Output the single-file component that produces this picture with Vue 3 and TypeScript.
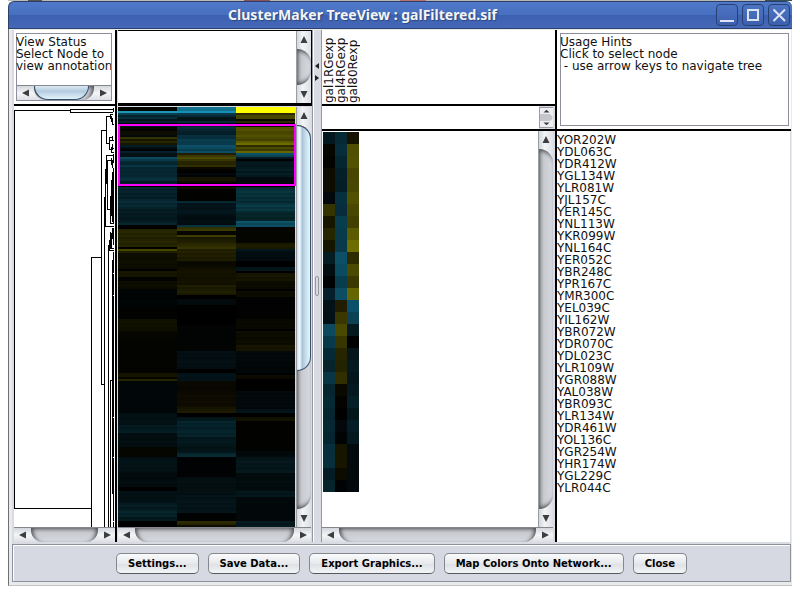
<script setup lang="ts">
import { defineComponent, h } from 'vue'

type Run = [end: number, color: string]

const arrowPaths: Record<string, string> = {
  up: 'M4 0 L7.5 7 H0.5 Z',
  down: 'M4 8 L0.5 1 H7.5 Z',
  left: 'M0 4 L7 0.5 V7.5 Z',
  right: 'M8 4 L1 0.5 V7.5 Z',
}

const ScrollBar = defineComponent({
  props: {
    dir: { type: String, default: 'v' },
    thumb: { type: Number, default: 0 },
  },
  setup(props) {
    const arrow = (kind: string) =>
      h('button', { class: 'sb-btn', type: 'button', 'aria-label': `Scroll ${kind}` }, [
        h('svg', { viewBox: '0 0 8 8' }, [h('path', { d: arrowPaths[kind], fill: '#3c3e42' })]),
      ])
    return () => {
      const vertical = props.dir === 'v'
      const size = `${props.thumb}%`
      return h('div', { class: ['sb', vertical ? 'sb-v' : 'sb-h'] }, [
        arrow(vertical ? 'up' : 'left'),
        h('div', { class: 'sb-track' }, props.thumb
          ? [h('div', { class: 'sb-thumb', style: vertical ? { height: size } : { width: size } })]
          : []),
        arrow(vertical ? 'down' : 'right'),
      ])
    }
  },
})

const experiments = ['gal1RGexp', 'gal4RGexp', 'gal80Rexp']

const genes = [
  'YOR202W', 'YDL063C', 'YDR412W', 'YGL134W', 'YLR081W', 'YJL157C', 'YER145C', 'YNL113W', 'YKR099W', 'YNL164C',
  'YER052C', 'YBR248C', 'YPR167C', 'YMR300C', 'YEL039C', 'YIL162W', 'YBR072W', 'YDR070C', 'YDL023C', 'YLR109W',
  'YGR088W', 'YAL038W', 'YBR093C', 'YLR134W', 'YDR461W', 'YOL136C', 'YGR254W', 'YHR174W', 'YGL229C', 'YLR044C',
]

/* Colours of the selected genes, one list per experiment. */
const selected: string[][] = [
  ['#04191f', '#060600', '#030300', '#0c0c00', '#0c0c00', '#02080c', '#343400', '#171700', '#262600', '#151500',
    '#041c23', '#020d12', '#000303', '#05202a', '#031216', '#021115', '#0d4a5e', '#08394a', '#062a35', '#05242c',
    '#083645', '#05262f', '#062a34', '#05262f', '#052833', '#052630', '#072f3b', '#082f3c', '#041c25', '#05242c'],
  ['#062a34', '#072c3a', '#05262f', '#041f28', '#041e27', '#07303e', '#072d3c', '#083d4d', '#073a4a', '#083a4b',
    '#0c4f67', '#0b4b60', '#083d4e', '#0c4d64', '#221d00', '#3a3700', '#4a4900', '#373500', '#272500', '#242300',
    '#312f00', '#0a0900', '#040300', '#000000', '#02080c', '#010405', '#171400', '#171400', '#0c0b00', '#000203'],
  ['#161300', '#504f00', '#525100', '#474500', '#494800', '#525100', '#494800', '#424000', '#5c5b00', '#6e6d00',
    '#2d2c00', '#4a4a00', '#3b3900', '#666600', '#0b5069', '#0b4254', '#05191f', '#000202', '#04161b', '#041a20',
    '#04161b', '#041a20', '#041f26', '#03161a', '#051d24', '#04191e', '#020a0e', '#020a0e', '#020a0c', '#02080b'],
]

const before: string[][] = [
  ['#060800', '#060600', '#1c96b4', '#094152', '#04222c', '#072f3c', '#03161d', '#05242f', '#010608'],
  ['#11728f', '#11728f', '#1690b4', '#08384a', '#062b38', '#031418', '#031418', '#062c3a', '#010a0c'],
  ['#ffff00', '#ffff00', '#ffff00', '#2c2c00', '#474700', '#474700', '#0a0a00', '#2a2a00', '#000000'],
]

/* Runs of similar rows below the selection: last row (exclusive) and base colour. */
const after: Run[][] = [
  [[40, '#000000'], [41, '#08303c'], [46, '#052028'], [51, '#062730'], [58, '#04191f'], [59, '#062932'], [61, '#000000'],
    [70, '#232300'], [71, '#000000'], [72, '#454500'], [73, '#1a1a00'], [81, '#0d0d00'], [82, '#000000'], [85, '#141400'],
    [87, '#020200'], [91, '#0c0c00'], [100, '#000405'], [106, '#020200'], [112, '#101000'], [116, '#060500'],
    [133, '#030300'], [135, '#151400'], [136, '#050500'], [137, '#262500'], [153, '#010608'], [159, '#021014'],
    [163, '#031a20'], [170, '#020d10'], [175, '#050500'], [182, '#031216'], [190, '#020b0d'], [192, '#000000'],
    [198, '#031014'], [202, '#041c22'], [205, '#052128'], [207, '#03191c'], [210, '#000000']],
  [[40, '#000000'], [41, '#121100'], [47, '#020200'], [48, '#06242c'], [54, '#03141a'], [59, '#020d11'], [60, '#07303c'],
    [62, '#3a3900'], [64, '#060500'], [65, '#3a3800'], [68, '#1c1b00'], [70, '#2a2900'], [71, '#3e3d00'], [77, '#1e1d00'],
    [80, '#0a0900'], [89, '#121100'], [94, '#1c1c00'], [96, '#000000'], [99, '#020a0c'], [109, '#000000'],
    [122, '#020303'], [131, '#030e12'], [133, '#000000'], [137, '#03131a'], [143, '#090700'], [150, '#0d0a00'],
    [153, '#1a1700'], [155, '#000000'], [157, '#02181c'], [165, '#052129'], [169, '#03181c'], [173, '#031417'],
    [175, '#062830'], [185, '#010203'], [194, '#030f11'], [203, '#041318'], [207, '#010202'], [209, '#292600'],
    [210, '#0b0a00']],
  [[40, '#000000'], [47, '#07303a'], [48, '#04222a'], [52, '#083844'], [57, '#052529'], [60, '#0c4a5c'], [68, '#050500'],
    [71, '#1c1b00'], [72, '#03161d'], [77, '#020c10'], [80, '#000000'], [82, '#04161c'], [83, '#000000'],
    [87, '#161500'], [91, '#0a0a00'], [92, '#000000'], [95, '#0c0b00'], [106, '#020203'], [111, '#090800'],
    [112, '#000000'], [119, '#0c0b00'], [122, '#161400'], [127, '#02090a'], [133, '#010607'], [134, '#000000'],
    [136, '#0c0a00'], [142, '#000000'], [151, '#02090b'], [153, '#031217'], [155, '#000000'], [157, '#131100'],
    [172, '#020200'], [175, '#02080a'], [183, '#04161a'], [192, '#020b0d'], [195, '#03161a'], [207, '#02080a'],
    [210, '#04171c']],
]

/* Neighbouring rows of one run differ slightly in intensity. */
function shade(color: string, row: number, column: number): string {
  const factor = 0.86 + ((row * 7 + column * 5) % 5) * 0.07
  const value = parseInt(color.slice(1), 16)
  const channels = [value >> 16, (value >> 8) & 255, value & 255]
  return `rgb(${channels.map((c) => Math.min(255, Math.round(c * factor))).join(',')})`
}

const overview: string[][] = before.map((head, column) => {
  const colors = [...head, ...selected[column]]
  for (const [end, color] of after[column]) {
    while (colors.length < end) colors.push(shade(color, colors.length, column))
  }
  return colors
})

/* Dendrogram branches: the joining line and its two child distances. */
const branches = [
  'M113 109.5H70.5V112.5H113', 'M70 110.5H14.5V508.5H91', 'M101 257.5H91.5V528',
  'M106 130.5H101.5V384.5H105', 'M110 116.5H106.5V143.5H109', 'M112 137.5H109.5V149.5H111',
  'M110.5 114V118.5H113M110 114.5H113M111.5 116V121.5H113M112.5 118V124H114',
  'M112.5 136V141M111.5 147V152.5H114M111 148.5H114M113.5 108V112M110 140.5H114M112.5 144V150',
  'M113 155.5H106.5V169M106 160.5H113M107.5 160V209.5H110M110.5 196V223.5H113M105.5 169V226.5H114M106.5 169V184',
  'M111.5 158V165M112.5 160V168M113.5 154V163M112.5 172V222M111.5 180V216M113.5 168V224M110 214.5H113',
  'M104.5 197V528M108.5 245V528M111 232.5V248.5H114M110.5 232V249M109 250.5H114M109.5 240V250M112.5 228V239M113.5 228V245',
  'M110.5 528V380.5H112M112.5 260V494M113.5 252V273M113.5 274V295M113.5 296V417M113.5 418V457M113.5 458V521',
  'M113.5 522V528',
]

const actions = ['Settings...', 'Save Data...', 'Export Graphics...', 'Map Colors Onto Network...', 'Close']
</script>

<template>
  <div class="desktop-edge"></div>
  <div class="window">
    <header class="titlebar">
      <h1>ClusterMaker TreeView : galFiltered.sif</h1>
      <div class="window-buttons">
        <button type="button" aria-label="Minimize">
          <svg viewBox="0 0 20 20"><path d="M3 16H17" stroke-width="2" /></svg>
        </button>
        <button type="button" aria-label="Maximize">
          <svg viewBox="0 0 20 20"><path d="M5 5H15V15H5Z" stroke-width="2" /></svg>
        </button>
        <button type="button" aria-label="Close window">
          <svg viewBox="0 0 20 20"><path d="M4.5 4.5L16 16M16 4.5L4.5 16" stroke-width="2" /></svg>
        </button>
      </div>
    </header>

    <div class="body">
      <main class="panes">
        <section class="pane left-pane">
          <div class="cell status-cell">
            <div class="message-box status-box">
              <p>View Status<br>Select Node to<br>view annotation</p>
              <ScrollBar dir="h" :thumb="92" />
            </div>
          </div>
          <div class="cell array-tree">
            <div class="canvas"></div>
            <ScrollBar />
          </div>
          <div class="cell gene-tree">
            <svg class="dendrogram" viewBox="14 106 100 421" preserveAspectRatio="none" shape-rendering="crispEdges">
              <path v-for="d in branches" :key="d" :d="d" />
            </svg>
            <ScrollBar dir="h" />
          </div>
          <div class="cell overview">
            <div class="overview-row">
              <div class="overview-map">
                <svg viewBox="0 0 3 210" preserveAspectRatio="none" shape-rendering="crispEdges">
                  <template v-for="(colors, column) in overview" :key="column">
                    <rect v-for="(color, row) in colors" :key="row" :x="column" :y="row" width="1" height="1" :fill="color" />
                  </template>
                </svg>
                <div class="selection"></div>
              </div>
              <ScrollBar :thumb="64" />
            </div>
            <ScrollBar dir="h" />
          </div>
        </section>

        <div class="divider">
          <div class="divider-arrows">
            <svg viewBox="0 0 4 6"><path d="M4 0V6L0 3Z" /></svg>
            <svg viewBox="0 0 4 6"><path d="M0 0V6L4 3Z" /></svg>
          </div>
          <div class="grip"></div>
        </div>

        <section class="pane right-pane">
          <div class="zoom-column">
            <div class="array-names">
              <span v-for="name in experiments" :key="name">{{ name }}</span>
            </div>
            <div class="zoom-tree">
              <div class="canvas"></div>
              <div class="mini-scroll">
                <svg viewBox="0 0 15 21" preserveAspectRatio="none">
                  <path d="M0 6.5H11Q14.5 8 14.5 10.5Q14.5 13 11 14.5H0Z" fill="#c4c6cc" />
                  <path d="M7.5 2L11 5H4ZM7.5 19L11 16H4Z" fill="#3c3e42" />
                </svg>
              </div>
            </div>
            <div class="zoom-view">
              <div class="zoom-row">
                <div class="canvas zoom-canvas">
                  <svg viewBox="0 0 3 30" shape-rendering="crispEdges">
                    <template v-for="(colors, column) in selected" :key="column">
                      <rect v-for="(color, row) in colors" :key="row" :x="column" :y="row" width="1" height="1" :fill="color" />
                    </template>
                  </svg>
                </div>
                <ScrollBar />
              </div>
              <ScrollBar dir="h" />
            </div>
          </div>
          <div class="names-column">
            <div class="hints">
              <div class="message-box">
                <p>Usage Hints<br>Click to select node<br>&nbsp;- use arrow keys to navigate tree</p>
              </div>
            </div>
            <ul class="gene-names">
              <li v-for="gene in genes" :key="gene">{{ gene }}</li>
            </ul>
          </div>
        </section>
      </main>

      <footer class="actions">
        <button v-for="label in actions" :key="label" type="button">{{ label }}</button>
      </footer>
    </div>
  </div>
</template>

<style>
body {
  background: #fff;
}
.sb {
  display: flex;
  box-sizing: border-box;
  flex: none;
  background: linear-gradient(90deg, #d3d6dc, #f2f4f6 40%, #dddfe4);
}
.sb-v {
  flex-direction: column;
  width: 15px;
  border-left: 1px solid #9a9ca3;
}
.sb-h {
  height: 15px;
  border-top: 1px solid #85878d;
  background: linear-gradient(180deg, #d3d6dc, #f4f5f7 50%, #dddfe4);
}
.sb-btn {
  display: flex;
  flex: none;
  align-items: center;
  justify-content: center;
  width: 17px;
  height: 100%;
  padding: 0;
  border: 0;
  background: none;
}
.sb-v .sb-btn {
  width: 100%;
  height: 18px;
}
.sb-btn svg {
  width: 8px;
  height: 8px;
}
.sb-track {
  flex: 1;
  min-width: 0;
  min-height: 0;
  background: linear-gradient(180deg, #a2a4a9, #c8cad0 35%, #d8dae1);
  border-radius: 0 0 12px 12px;
  box-shadow: inset 4px 1px 4px -2px #4c4d50, inset -4px 1px 4px -2px #4c4d50;
}
.sb-v .sb-track {
  background: linear-gradient(90deg, #a2a4a9, #c8cad0 35%, #d8dae1);
  border-radius: 0 14px 14px 0;
  box-shadow: inset 1px 4px 4px -2px #4c4d50, inset 1px -4px 4px -2px #4c4d50;
}
.sb-thumb {
  box-sizing: border-box;
  height: 100%;
  border: 1px solid #33506a;
  border-top: 0;
  border-radius: 0 0 14px 14px;
  background: linear-gradient(180deg, #dce7f2, #b4cbdf 40%, #e2f3fc);
}
.sb-v .sb-thumb {
  width: 100%;
  height: auto;
  border: 1px solid #33506a;
  border-left: 0;
  border-radius: 0 14px 14px 0;
  background: linear-gradient(90deg, #c9dcea, #f4fafd 20%, #a9c3d9 40%, #c6dcea 65%, #e6f6fd);
}
</style>

<style scoped>
.desktop-edge {
  height: 1px;
  margin: 0 8px;
  background: linear-gradient(90deg, #bbb 0 20px, #555 20px 34px, #bbb 34px 236px, #8b5560 236px 262px, #b7b7b7 262px 392px, #b97070 392px 418px, #b7b7b7 418px 757px, #34505c 757px);
}
.window {
  margin: 0 8px;
  font: 12px/12px "DejaVu Sans", sans-serif;
  color: #111;
}
.titlebar {
  display: flex;
  align-items: center;
  box-sizing: border-box;
  height: 28px;
  padding: 0 2px 0 0;
  border: 1px solid #2b4069;
  border-right: 0;
  border-radius: 6px 6px 0 0;
  background: linear-gradient(180deg, #5079c9, #4870c1 48%, #3d61af 52%, #4569b8);
}
.titlebar h1 {
  flex: 1;
  margin: 0;
  overflow: hidden;
  font: bold 14px/20px "Noto Sans", sans-serif;
  color: #f4f4f4;
  text-align: center;
  text-shadow: 1px 1px 1px #2c4780;
  white-space: nowrap;
}
.window-buttons {
  display: flex;
  gap: 4px;
}
.window-buttons button {
  box-sizing: border-box;
  width: 22px;
  height: 22px;
  padding: 0;
  border: 1px solid #27406f;
  border-radius: 4px;
  background: linear-gradient(180deg, #4d75c4, #3c60ae);
}
.window-buttons svg {
  display: block;
  width: 20px;
  height: 20px;
  fill: none;
  stroke: #dce4f4;
}
.body {
  padding: 1px 1px 3px 3px;
  border-left: 1px solid #6f6f6f;
  border-bottom: 1px solid #c4c4c4;
  background: #e9eaec;
}
.panes {
  display: flex;
  padding: 0 0 2px 2px;
  background: #d8dbe2;
}
.left-pane {
  display: grid;
  flex: 298 1 0;
  grid-template-columns: minmax(0, 103fr) minmax(0, 195fr);
  grid-template-rows: 76px auto;
}
.cell {
  box-sizing: border-box;
  display: flex;
}
.canvas {
  flex: 1;
  background: #fff;
}
.status-cell {
  padding: 3px 3px 3px 2px;
  border-right: 2px solid #000;
  border-bottom: 2px solid #000;
  background: #fff;
}
.message-box {
  flex: 1;
  box-sizing: border-box;
  min-width: 0;
  border: 1px solid #8e8f9c;
  background: #fff;
}
.message-box p {
  margin: 0 0 0 -1px;
  padding: 2px 0;
  overflow: hidden;
  white-space: nowrap;
}
.status-box {
  display: flex;
  flex-direction: column;
  justify-content: space-between;
}
.array-tree {
  margin-left: 1px;
  border: 1px solid #000;
  border-left: 0;
  border-bottom-width: 3px;
}
.gene-tree {
  flex-direction: column;
  border-right: 2px solid #000;
}
.dendrogram {
  display: block;
  width: 100%;
  height: 421px;
  padding-right: 1px;
  box-sizing: border-box;
  background: #fff;
  fill: none;
  stroke: #000;
}
.overview {
  flex-direction: column;
  padding: 1px 1px 0 1px;
}
.overview-row {
  display: flex;
  gap: 1px;
}
.overview-map {
  position: relative;
  flex: 1;
}
.overview-map svg {
  display: block;
  width: 100%;
  height: 420px;
}
.selection {
  position: absolute;
  top: 17px;
  left: 0;
  right: -1px;
  box-sizing: border-box;
  height: 62px;
  border: 2px solid #f0f;
}
.divider {
  display: flex;
  flex-direction: column;
  align-items: center;
  box-sizing: border-box;
  width: 10px;
  border: 1px solid #9496a2;
  border-width: 0 1px;
  background: #d8dbe2;
  box-shadow: inset 1px 0 #fff;
}
.divider-arrows {
  display: flex;
  flex-direction: column;
  gap: 6px;
  margin: 33px 0 195px;
}
.divider-arrows svg {
  width: 4px;
  height: 6px;
  fill: #222;
}
.grip {
  box-sizing: border-box;
  width: 4px;
  height: 20px;
  border: 1px solid #9496a2;
  border-radius: 2px;
}
.right-pane {
  display: flex;
  flex: 469 1 0;
}
.zoom-column {
  display: flex;
  flex: 234 1 0;
  flex-direction: column;
  box-sizing: border-box;
  border-right: 2px solid #000;
}
.array-names {
  display: flex;
  box-sizing: border-box;
  height: 76px;
  padding: 0 1px 1px;
  border-bottom: 2px solid #000;
  background: #fff;
}
.array-names span {
  width: 12px;
  writing-mode: vertical-rl;
  transform: rotate(180deg);
}
.zoom-tree {
  display: flex;
  box-sizing: border-box;
  height: 25px;
  border-bottom: 2px solid #000;
}
.mini-scroll {
  box-sizing: border-box;
  width: 14px;
  margin: 1px 2px 1px 0;
  border: 1px solid #9a9ca3;
  border-right: 0;
  background: #eceef1;
}
.mini-scroll svg {
  display: block;
  width: 100%;
  height: 100%;
}
.zoom-view {
  display: flex;
  flex: 1;
  flex-direction: column;
  padding-right: 2px;
}
.zoom-row {
  display: flex;
  flex: 1;
}
.zoom-canvas {
  padding: 1px;
}
.zoom-canvas svg {
  display: block;
  width: 36px;
  height: 360px;
}
.names-column {
  display: flex;
  flex: 235 1 0;
  flex-direction: column;
  min-width: 0;
}
.hints {
  display: flex;
  box-sizing: border-box;
  height: 101px;
  padding: 3px 2px 3px 3px;
  border-bottom: 2px solid #000;
  background: #fff;
}
.gene-names {
  flex: 1;
  margin: 0 1px 0 0;
  padding: 3px 0 0;
  background: #fff;
  list-style: none;
}
.actions {
  display: flex;
  flex-wrap: wrap;
  gap: 9px;
  justify-content: center;
  padding: 8px 0 7px;
  border: 1px solid #8e909b;
  background: #d6d9e1;
  box-shadow: inset 1px 1px #fff;
}
.actions button {
  box-sizing: border-box;
  height: 21px;
  padding: 0 11px;
  border: 1px solid #85888e;
  border-bottom-color: #55585c;
  border-radius: 5px;
  background: linear-gradient(180deg, #fbfbfc, #e6e8ec 50%, #dfe1e6 55%, #f3f4f6);
  font: bold 10px/18px "DejaVu Sans", sans-serif;
  color: #000;
}
</style>
